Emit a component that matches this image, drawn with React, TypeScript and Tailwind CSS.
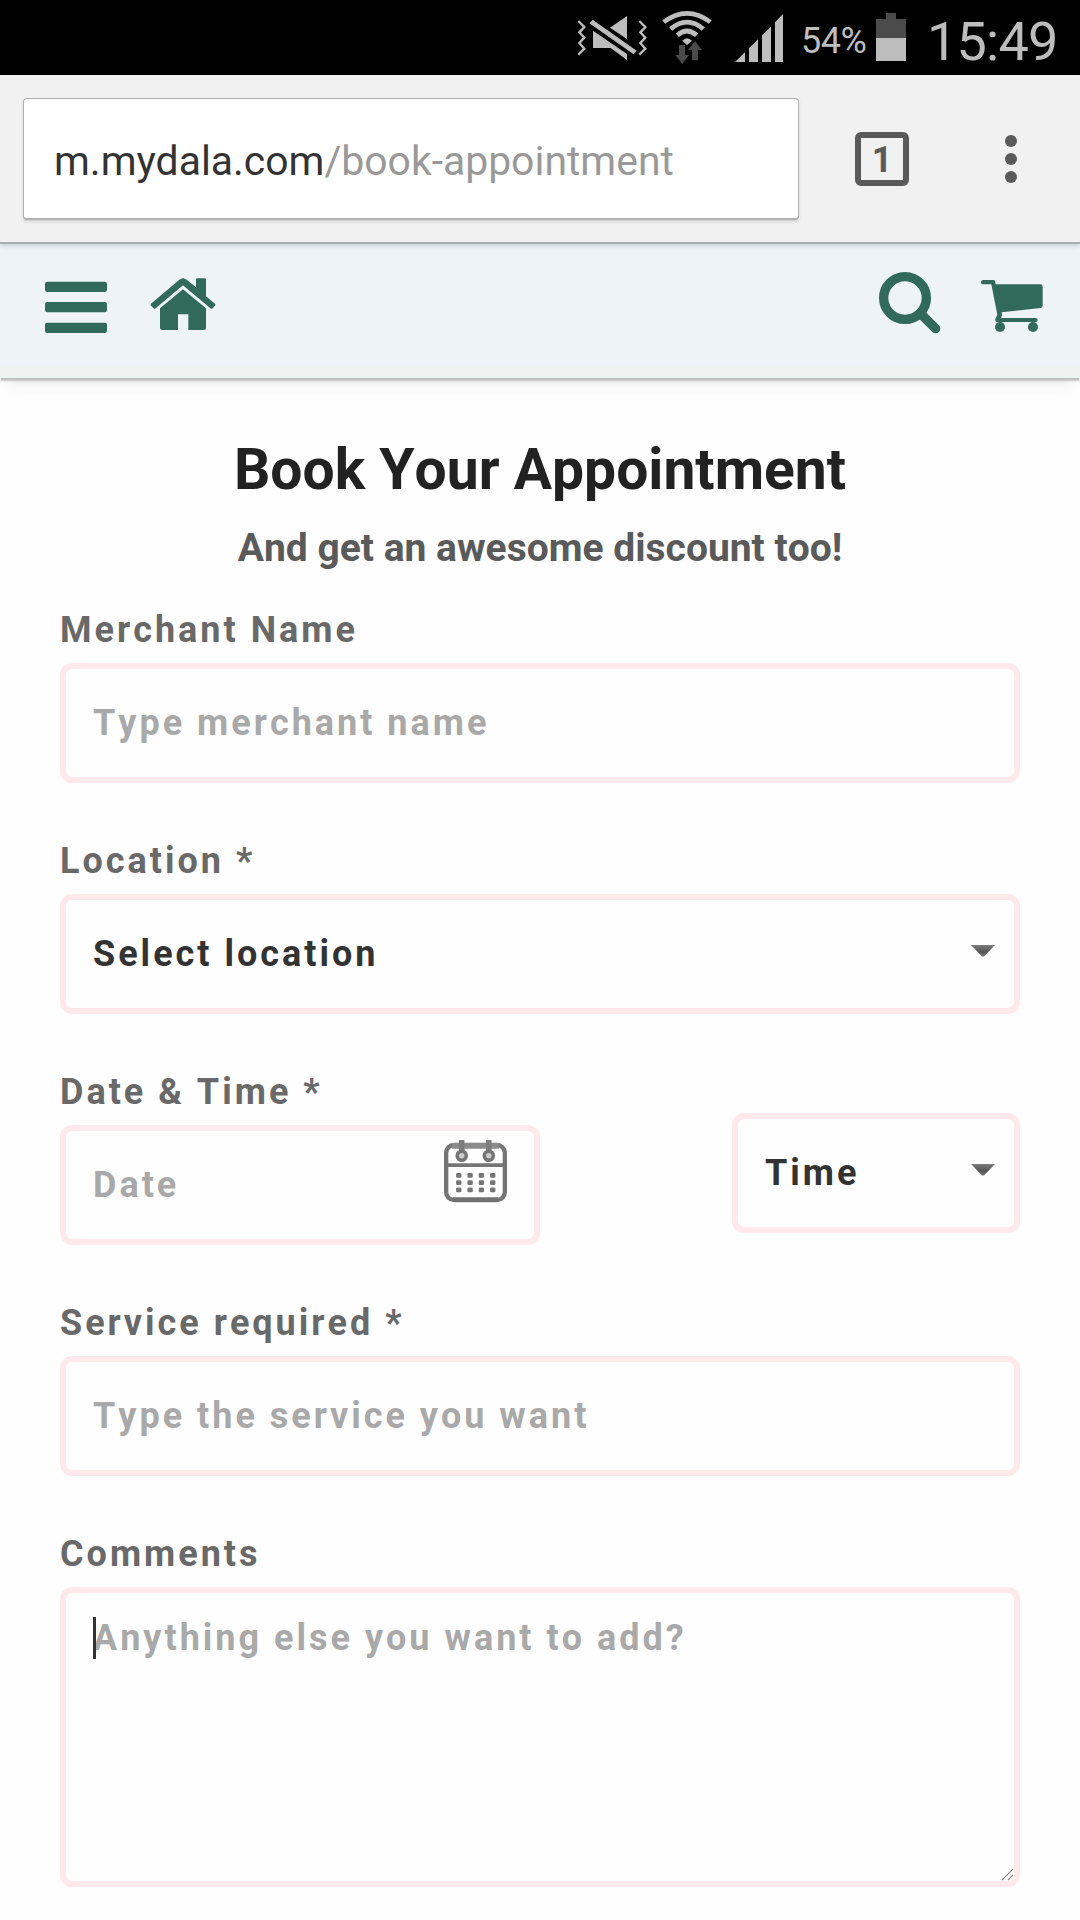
import { ReactNode } from "react";

type FieldProps = {
  label: string;
  children: ReactNode;
};

const controlClass =
  "h-[120px] w-full appearance-none rounded-xl border-6 border-[#ffe9ec] bg-transparent px-[27px] font-bold text-[36px] tracking-[3px] text-[#333] outline-none placeholder:text-[#a9a9a9] placeholder:opacity-100";

/** Android status bar */
function StatusBar() {
  return (
    <div className="flex h-[75px] bg-black text-[#bdbdbd]">
      {/* vibrate / muted */}
      <svg className="ml-[577px] h-[75px] w-[70px]" viewBox="51 0 210 225" fill="currentColor">
        <path
          d="M55 63l18 18-15 16 15 16-15 16 15 17-18 18M238 63l18 18-15 16 15 16-15 16 15 17-18 18"
          fill="none"
          stroke="currentColor"
          strokeWidth="7"
        />
        <path d="M98 59 230 152 221 163 88 70zM201 48v69l-51-34zM99 92l102 70v18l-49-36H99z" />
      </svg>
      {/* wifi with traffic arrows */}
      <svg className="ml-[15px] h-[75px] w-[50px]" viewBox="306 0 150 225" fill="none">
        <g stroke="currentColor" strokeWidth="14">
          <path d="M311 66Q381 14 451 66" />
          <path d="M332 87Q381 46 430 87" />
          <path d="M352 106Q381 80 410 106" />
        </g>
        <path d="M367 122q14-15 29 0l-15 13z" fill="currentColor" />
        <path
          d="M357 135h18v30h12l-20 27-21-27h11zM396 181v-31h-12l21-27 21 27h-12v31z"
          fill="#4a4a4a"
        />
      </svg>
      <svg className="ml-[23px] h-[75px] w-[48px]" viewBox="525 0 144 225" fill="currentColor">
        <path d="M525 186l30-29v29zM567 186v-41l27-27v68zM606 186v-80l27-26v106zM645 186V67l24-25v144z" />
      </svg>
      <span className="ml-[18px] mt-[20px] w-[75px] text-[36px] leading-[42px] tracking-[-0.5px]">
        54%
      </span>
      <svg className="h-[75px] w-[30px]" viewBox="0 0 30 75">
        <path d="M0 19h10v-6h10v6h10v20H0z" fill="#4b4b4b" />
        <path d="M0 38h30v23H0z" fill="currentColor" />
      </svg>
      <span className="ml-[21px] mt-[10px] text-[54px] leading-[63px] tracking-[-0.8px]">15:49</span>
    </div>
  );
}

function AddressBar() {
  return (
    <div className="relative z-10 flex h-[169px] items-start border-b-2 border-[#a9adaf] bg-[#f1f1f1] pl-[23px] pt-[23px] text-[#5a5a5a] shadow-[0_2px_5px_rgba(0,0,0,0.14)]">
      <div className="flex h-[122px] w-[776px] items-center rounded-[4px] border border-b-2 border-[#b0b0b0] bg-white pl-[30px] pt-[6px] text-[40.9px] shadow-[0_2px_3px_rgba(0,0,0,0.12)]">
        <span className="text-[#333]">m.mydala.com</span>
        <span className="text-[#999]">/book-appointment</span>
      </div>
      <div className="ml-[56px] mt-[34px] flex size-[54px] items-center justify-center rounded-[6px] border-6 border-[#5a5a5a] pt-[2px] text-[36px] font-bold">
        1
      </div>
      <div className="ml-[96px] mt-[37px] flex flex-col gap-[6px]">
        <i className="size-3 rounded-full bg-[#5a5a5a]" />
        <i className="size-3 rounded-full bg-[#5a5a5a]" />
        <i className="size-3 rounded-full bg-[#5a5a5a]" />
      </div>
    </div>
  );
}

function SiteHeader() {
  return (
    <header className="flex h-[134px] bg-[linear-gradient(#edf3f6_90%,#eef2f1_92%)] pl-[45px] text-[#31695a] shadow-[0_3px_1px_-1px_#c0c0c0,0_4px_2px_-1px_rgba(0,0,0,0.16),0_8px_16px_-6px_rgba(0,0,0,0.12)]">
      <svg className="h-[134px] w-[62px]" viewBox="135 12 186 402" fill="currentColor">
        <rect x="135" y="125" width="186" height="31" rx="7" />
        <rect x="135" y="186" width="186" height="31" rx="7" />
        <rect x="135" y="248" width="186" height="31" rx="7" />
      </svg>
      <svg className="ml-[43px] h-[134px] w-[66px]" viewBox="450 12 198 402" fill="currentColor">
        <path d="M453 191L538 119Q549 110 560 119L588 142V119Q588 115 592 115H614Q618 115 618 119V169L645 191Q648 194 645 197L638 205Q635 208 631 205L549 136 467 205Q464 208 461 205L453 197Q450 194 453 191Z" />
        <path d="M549 148L618 205V263Q618 270 611 270H565V223H534V270H487Q480 270 480 263V205Z" />
      </svg>
      <svg className="ml-[663px] h-[134px] w-[62px]" viewBox="117 12 186 402" fill="none">
        <circle cx="195" cy="174" r="64" stroke="currentColor" strokeWidth="28" />
        <path d="M247 226l40 40" stroke="currentColor" strokeWidth="28" strokeLinecap="round" />
      </svg>
      <svg className="ml-[40px] h-[134px] w-[62px]" viewBox="423 12 186 402" fill="currentColor">
        <path d="M430 120H460Q465 120 466 126L467 133H601Q608 133 608 140V197Q608 203 601 204L485 217 486 226 483 234H587Q593 234 593 240 593 246 587 246H472Q464 246 466 237L472 224 454 133H430Q423 133 423 126.500 423 120 430 120Z" />
        <circle cx="480" cy="261" r="15" />
        <circle cx="579" cy="261" r="15" />
      </svg>
    </header>
  );
}

function Field({ label, children }: FieldProps) {
  return (
    <label className="flex flex-col gap-3">
      <span className="text-[36px] leading-[42px] font-bold tracking-[3px] text-[#696969]">
        {label}
      </span>
      {children}
    </label>
  );
}

/** Select box with the small arrow on the right */
function SelectBox({ value }: { value: string }) {
  return (
    <div className="relative">
      <select className={controlClass}>
        <option>{value}</option>
      </select>
      <svg className="absolute top-[51px] right-6 h-3 w-[26px]" viewBox="0 0 26 12">
        <defs>
          <linearGradient id="arrow" x1="0" y1="0" x2="0" y2="1">
            <stop offset="0" stopColor="#7c7c7c" />
            <stop offset="0.6" stopColor="#555" />
            <stop offset="1" stopColor="#777" />
          </linearGradient>
        </defs>
        <path d="M1 0h24L14 11.500h-2z" fill="url(#arrow)" />
      </svg>
    </div>
  );
}

function CalendarIcon() {
  const columns = [15, 26.5, 38, 49.5];
  const rows = [36, 43.3, 50.7];

  return (
    <svg
      className="absolute top-[15px] right-[33px] h-[63px] w-[63px]"
      viewBox="0 0 64 64"
      fill="none"
      stroke="#757575"
    >
      <rect x="2.200" y="5" width="59.600" height="56" rx="8" strokeWidth="4.400" />
      <path d="M8 6h48" stroke="#8c8c8c" strokeWidth="6" />
      <path d="M3 25.500h58" strokeWidth="4" />
      <path d="M9 60.500h46" stroke="#707070" strokeWidth="4.500" />
      {[18, 45.5].map((x) => (
        <g key={x}>
          <path d={`M${x} 0v13`} stroke="#7c7c7c" strokeWidth="5.500" />
          <circle cx={x} cy="16" r="4.600" fill="#ccc" strokeWidth="3.600" />
        </g>
      ))}
      {rows.map((y) =>
        columns.map((x) => (
          <rect
            key={`${x}-${y}`}
            x={x - 2.7}
            y={y - 2.4}
            width="5.400"
            height="4.800"
            rx="1.200"
            fill="#757575"
            stroke="none"
          />
        )),
      )}
    </svg>
  );
}

export default function App() {
  return (
    <div className="h-[1920px] w-[1080px] overflow-hidden bg-[#fefefe] font-[Roboto,sans-serif]">
      <StatusBar />
      <AddressBar />
      <SiteHeader />

      <main className="px-[60px] pt-[57px] [font-kerning:none]">
        <h1 className="text-center text-[57px] leading-[70px] font-bold text-[#222]">
          Book Your Appointment
        </h1>
        <h2 className="mt-[20px] text-center text-[39px] leading-[46px] font-bold text-[#5a5a5a]">
          And get an awesome discount too!
        </h2>

        <form className="mt-[38px] flex flex-col gap-[57px]">
          <Field label="Merchant Name">
            <input className={controlClass} placeholder="Type merchant name" />
          </Field>

          <Field label="Location *">
            <SelectBox value="Select location" />
          </Field>

          <div className="flex items-end justify-between">
            <div className="w-[480px]">
              <Field label="Date & Time *">
                <div className="relative">
                  <input className={controlClass} placeholder="Date" />
                  <CalendarIcon />
                </div>
              </Field>
            </div>
            <div className="mb-3 w-[288px]">
              <SelectBox value="Time" />
            </div>
          </div>

          <Field label="Service required *">
            <input className={controlClass} placeholder="Type the service you want" />
          </Field>

          <Field label="Comments">
            <div className="relative h-[300px] rounded-xl border-6 border-[#ffe9ec] px-[27px] pt-[24px]">
              <p className="text-[36px] leading-[42px] font-bold tracking-[3px] text-[#a9a9a9]">
                Anything else you want to add?
              </p>
              {/* caret */}
              <i className="absolute top-6 left-[27px] h-[42px] w-[3px] bg-[#333]" />
              {/* resize grip */}
              <svg
                className="absolute right-0 bottom-0 size-3"
                viewBox="0 0 12 12"
                stroke="#8a8a8a"
                strokeWidth="1.200"
              >
                <path d="M0 11L11 0M6 11l5-5" />
              </svg>
            </div>
          </Field>
        </form>
      </main>
    </div>
  );
}
